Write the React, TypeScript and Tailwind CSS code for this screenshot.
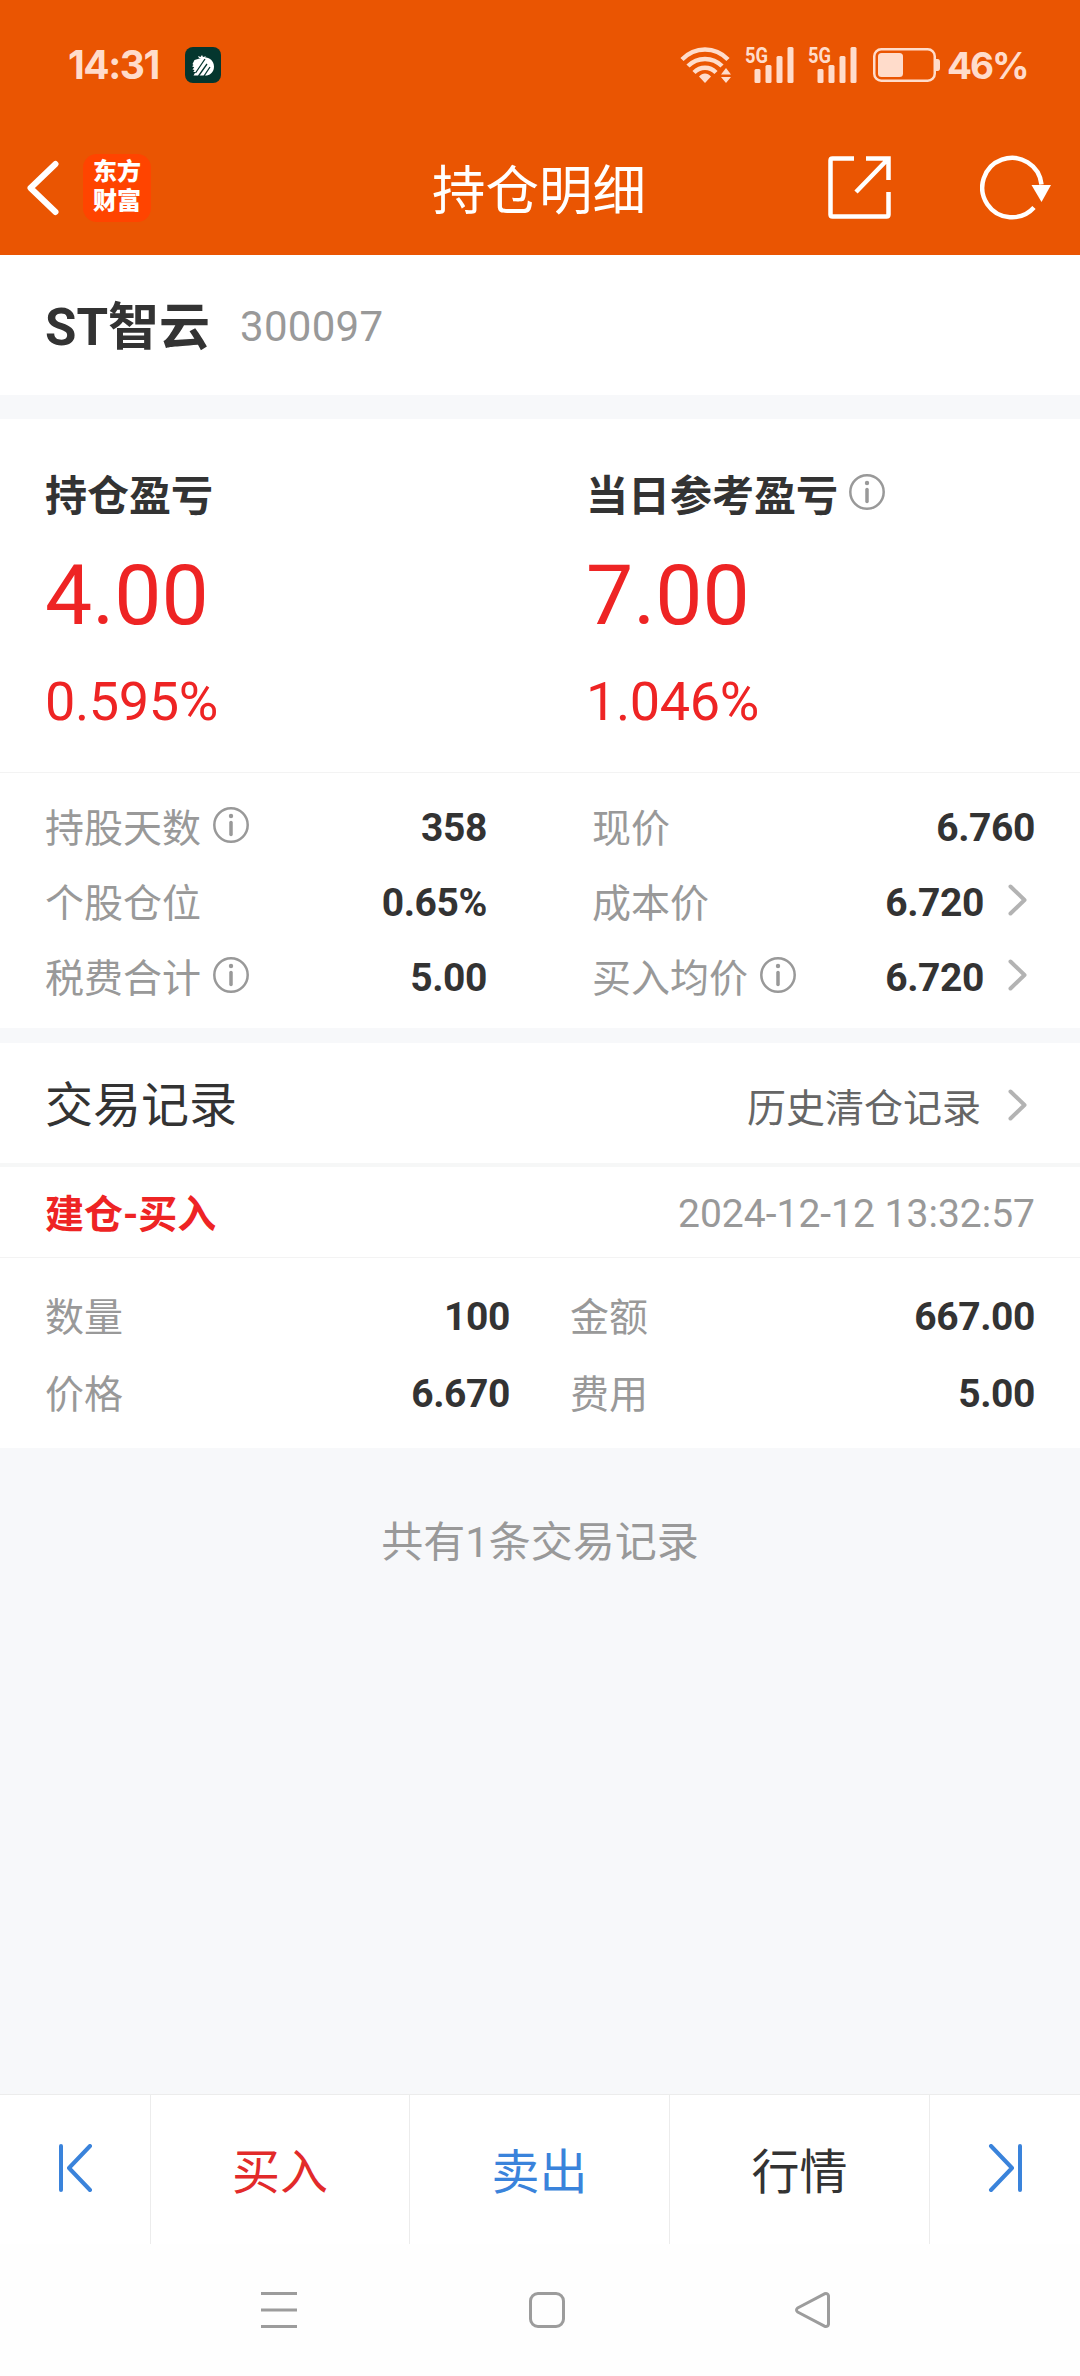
import React from 'react';

const positionLeft = [
  { label: '持股天数', value: '358', info: true },
  { label: '个股仓位', value: '0.65%' },
  { label: '税费合计', value: '5.00', info: true },
];

const positionRight = [
  { label: '现价', value: '6.760' },
  { label: '成本价', value: '6.720', link: true },
  { label: '买入均价', value: '6.720', info: true, link: true },
];

export default function App() {
  return (
    <div className="flex h-[2376px] w-[1080px] flex-col overflow-hidden bg-[#f7f8fa] font-[Roboto,'Noto_Sans_CJK_SC',sans-serif] text-[39px] text-[#333]">
      <header className="h-[255px] shrink-0 bg-[#ea5502] text-white">
        <StatusBar />
        <NavBar />
      </header>

      {/* Stock name */}
      <div className="flex h-[140px] shrink-0 items-center bg-white pl-[45px]">
        <span className="w-[195px] pt-[5px] text-[51px] leading-[60px] font-bold whitespace-nowrap">ST智云</span>
        <span className="pt-[3px] text-[42px] leading-[60px] tracking-[0.3px] text-[#999]">300097</span>
      </div>

      {/* Profit and loss */}
      <section className="mt-6 flex h-[354px] shrink-0 border-b border-[#f3f3f3] bg-white pt-[47px] pl-[45px]">
        <Profit label="持仓盈亏" amount="4.00" percent="0.595%" />
        <Profit label="当日参考盈亏" amount="7.00" percent="1.046%" info />
      </section>

      {/* Position details */}
      <section className="flex h-[255px] shrink-0 justify-between bg-white pt-[17px] pr-[45px] pl-[45px]">
        <div className="w-[442px]">
          {positionLeft.map((row) => <DetailRow key={row.label} {...row} />)}
        </div>
        <div className="w-[443px]">
          {positionRight.map((row) => <DetailRow key={row.label} {...row} />)}
        </div>
      </section>

      {/* Trade records */}
      <section className="mt-[15px] h-[405px] shrink-0 bg-white">
        <div className="flex h-[124px] items-center justify-between border-b-4 border-[#f6f7f7] px-[45px]">
          <h2 className="pt-[6px] text-5xl leading-[60px]">交易记录</h2>
          <div className="flex items-center text-[#666]">
            <span className="pt-[11px] leading-[60px]">历史清仓记录</span>
            <Chevron className="mt-[3px] ml-[27px]" />
          </div>
        </div>
        <div className="flex h-[91px] items-center justify-between border-b border-[#f3f3f3] px-[45px]">
          <span className="pt-[5px] leading-[60px] font-bold text-[#ee2424]">建仓-买入</span>
          <span className="pt-[3px] leading-[60px] text-[#999]">2024-12-12 13:32:57</span>
        </div>
        <div className="grid grid-cols-[465px_465px] gap-x-[60px] px-[45px] pt-5">
          <TradeCell label="数量" value="100" />
          <TradeCell label="金额" value="667.00" />
          <TradeCell label="价格" value="6.670" />
          <TradeCell label="费用" value="5.00" />
        </div>
      </section>

      <p className="grow pt-[65px] text-center text-[42px] leading-[60px] text-[#999]">共有1条交易记录</p>

      {/* Action bar */}
      <div className="flex h-[150px] shrink-0 border-t border-[#ececec] bg-white text-center text-5xl leading-[156px]">
        <button className="flex w-[151px] items-center border-r border-[#ececec] pl-[59px]">
          <svg className="-mt-1" width="34" height="48" viewBox="0 0 34 48" fill="none" stroke="#3a83db" strokeWidth="4" strokeLinecap="round" strokeLinejoin="round">
            <path d="M2 2v44M31 2 10 24l21 22" />
          </svg>
        </button>
        <button className="w-[259px] border-r border-[#ececec] text-[#e22a2a]">买入</button>
        <button className="w-[260px] border-r border-[#ececec] text-[#3a83db]">卖出</button>
        <button className="w-[260px] border-r border-[#ececec]">行情</button>
        <button className="flex w-[150px] items-center pl-[58px]">
          <svg className="-mt-1" width="34" height="48" viewBox="0 0 34 48" fill="none" stroke="#3a83db" strokeWidth="4" strokeLinecap="round" strokeLinejoin="round">
            <path d="M32 2v44M3 2l21 22L3 46" />
          </svg>
        </button>
      </div>

      {/* System navigation */}
      <div className="flex h-[132px] shrink-0 items-center bg-[#fefefe] pl-[261px]">
        <svg width="36" height="36" viewBox="0 0 36 36" stroke="#9c9c9c" strokeWidth="3">
          <path d="M0 1.5h36M0 18h36M0 34.5h36" />
        </svg>
        <div className="ml-[232px] size-9 rounded-[9px] border-[3px] border-[#9c9c9c]" />
        <svg className="ml-[230px]" width="36" height="36" viewBox="0 0 36 36" fill="none" stroke="#9c9c9c" strokeWidth="3" strokeLinejoin="round">
          <path d="M2.6 16 29.5 1.8q3.5-1 4 2v28.4q-.5 3-4 2L2.6 20q-2.200-2 0-4Z" />
        </svg>
      </div>
    </div>
  );
}

// UI Components
function StatusBar() {
  return (
    <div className="flex h-[120px] items-center pt-2.5 pl-[68px] font-[Inter,sans-serif] text-[39px] leading-[44px] font-bold text-[#ffdccb]">
      <span className="w-[117px] tracking-[-1.5px]">14:31</span>
      <svg width="36" height="36" viewBox="0 0 36 36">
        <rect width="36" height="36" rx="8" fill="#04362e" />
        <path d="M7.500 17 9.500 13l5-1.500 3-1c6-1 11.500 3 11.500 9 0 5-3 8-7 9H8.500l2-3.500H8.300l1.200-2-2-.5 1.700-2.300-2.200-1 1.500-1.200Z" fill="#fff" />
        <path d="m14 11-1-2 2.500 1L17 8l1 2 3-.8-1.500 2.200Z" fill="#fff" />
        <path d="m20 12-9.500 14M22 17l-8.500 12M25 20l-6 9" stroke="#04362e" strokeWidth="1.300" />
      </svg>
      <svg className="ml-[459px]" width="52" height="38" viewBox="0 0 52 38" fill="none" stroke="#ffdccb" strokeWidth="4.500">
        <path d="M2 13.500c13-13.300 33-13.300 46 0" />
        <path d="M8 20c9.500-9.500 24.500-9.500 34 0" />
        <path d="M14 26.500c6.500-6.300 15.500-6.300 22 0" />
        <path d="M19 30.500c3.500-4 8.500-4 12 0l-6 6.500Z" fill="#ffdccb" stroke="none" />
        <path d="m46 22 5 6.500H41ZM46 37l5-6H41Z" fill="#ffdccb" stroke="none" />
      </svg>
      <Signal className="ml-[13px]" />
      <Signal className="ml-[14px]" />
      <svg className="ml-[16px]" width="68" height="34" viewBox="0 0 68 34">
        <rect x="1.250" y="1.250" width="60.500" height="31.500" rx="7" fill="none" stroke="#ffdccb" strokeWidth="2.500" />
        <rect x="5" y="5" width="25" height="24" rx="3.500" fill="#ffdccb" />
        <path d="M63 11h1.500q2.500 0 2.500 3v6q0 3-2.500 3H63Z" fill="#ffdccb" />
      </svg>
      <span className="ml-[6px] pt-0.5 text-[37px] tracking-[-2px]">46%</span>
    </div>
  );
}

function Signal({ className }: { className: string }) {
  return (
    <svg className={className} width="49" height="54" viewBox="0 -8 49 54" fill="#ffdccb">
      <text x="0" y="16.500" fontSize="22" fontWeight="700" fontFamily="Roboto" textLength="23" lengthAdjust="spacingAndGlyphs">5G</text>
      <rect x="9.500" y="23" width="6" height="14" rx="1.500" />
      <rect x="20.500" y="19" width="6" height="18" rx="1.500" />
      <rect x="31.500" y="10" width="6" height="27" rx="1.500" />
      <rect x="42.500" y="1" width="6" height="36" rx="1.500" />
    </svg>
  );
}

function NavBar() {
  return (
    <div className="flex h-[135px] items-center pl-[27px]">
      <svg width="33" height="56" viewBox="0 0 33 56" fill="none" stroke="#fff" strokeWidth="6" strokeLinecap="round" strokeLinejoin="round">
        <path d="M28.500 4 3.500 28l25 24" />
      </svg>
      <div className="ml-[23px] size-[68px] rounded-[14px] bg-[#ff4400] pt-[4px] text-center text-2xl leading-[29px] font-black">
        东方<br />财富
      </div>
      <h1 className="ml-[281px] w-[218px] pt-[9px] text-[53.5px] leading-[60px] whitespace-nowrap">持仓明细</h1>
      <svg className="ml-[178px]" width="64" height="64" viewBox="0 0 64 64" fill="none" stroke="#fff" strokeWidth="4.500">
        <path d="M26 2.500H4.500q-2 0-2 2v54q0 2 2 2h54q2 0 2-2V36M38 2.500h22.500V24M60 3 28 36" />
      </svg>
      <svg className="ml-[88px]" width="72" height="66" viewBox="0 0 72 66">
        <path d="M61.500 29.500A29.700 29.700 0 1 0 54 52.500" fill="none" stroke="#fff" strokeWidth="4.500" />
        <path d="M51.500 30H71l-9.500 17Z" fill="#fff" />
      </svg>
    </div>
  );
}

function Profit({ label, amount, percent, info }: any) {
  return (
    <div className="w-[541px] shrink-0 text-[#ee2424]">
      <div className="flex h-[60px] items-center text-[42px] font-bold text-[#333]">
        {label}
        {info && <InfoIcon className="-mt-2 ml-[11px]" />}
      </div>
      <div className="mt-5 text-[84px] leading-[100px]">{amount}</div>
      <div className="mt-6 text-[54px] leading-[64px] tracking-[-0.4px]">{percent}</div>
    </div>
  );
}

function DetailRow({ label, value, info, link }: any) {
  return (
    <div className="flex h-[75px] items-center">
      <span className="pt-[3px] leading-[60px] text-[#999]">{label}</span>
      {info && <InfoIcon className="-mt-[5px] ml-3" />}
      <span className="ml-auto leading-[60px] font-bold tracking-[-0.4px]">{value}</span>
      {link && <Chevron className="-mt-[5px] ml-6" />}
    </div>
  );
}

function TradeCell({ label, value }: any) {
  return (
    <div className="flex h-[77px] items-center justify-between">
      <span className="pt-[3px] leading-[60px] text-[#999]">{label}</span>
      <span className="leading-[60px] font-bold tracking-[-0.4px]">{value}</span>
    </div>
  );
}

function InfoIcon({ className }: { className: string }) {
  return (
    <svg className={className} width="36" height="36" viewBox="0 0 36 36" fill="none" stroke="#999" strokeWidth="2.500">
      <circle cx="18" cy="18" r="16.700" />
      <path d="M18 15.500v12" strokeWidth="3.500" strokeLinecap="round" />
      <circle cx="18" cy="9" r="2.200" fill="#999" stroke="none" />
    </svg>
  );
}

function Chevron({ className }: { className: string }) {
  return (
    <svg className={className} width="27" height="32" viewBox="0 0 27 32" fill="none" stroke="#b3b3b3" strokeWidth="4" strokeLinecap="round" strokeLinejoin="round">
      <path d="m2.500 2.500 14 13.500-14 13.500" />
    </svg>
  );
}
